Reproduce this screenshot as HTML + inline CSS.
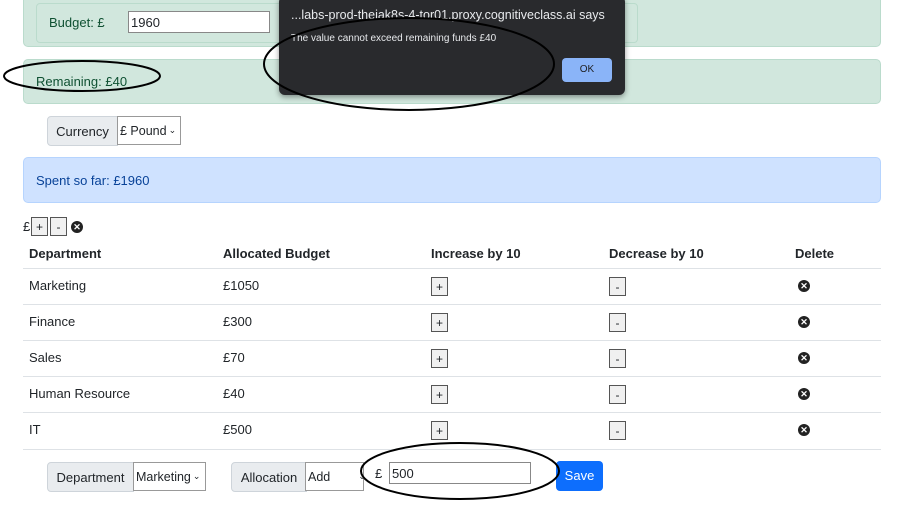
<!DOCTYPE html>
<html><head><style>
body{margin:0;width:902px;height:507px;position:relative;overflow:hidden;background:#fff;font-family:"Liberation Sans",sans-serif;font-size:13px;color:#212529}
.a{position:absolute;white-space:nowrap}
.green{background:#d1e7dd;border:1px solid #badbcc;border-radius:5px;color:#0f5132}
.grp{background:#e9ecef;border:1px solid #ced4da;border-radius:4px 0 0 4px;display:flex;align-items:center;justify-content:center;color:#212529}
.sel{background:#fff;border:1px solid #999;display:flex;align-items:center;padding-left:2px;box-sizing:border-box;font-size:12.5px;white-space:nowrap;overflow:hidden}
.sel i{font-style:normal;font-size:9px;margin-left:2px}
.th{font-weight:bold}
.line{position:absolute;left:23px;width:858px;height:1px;background:#dee2e6}
.btn{position:absolute;width:17px;height:19px;border:1px solid #555;background:#f0f0f0;font-size:12px;text-align:center;line-height:19px;box-sizing:border-box}
.x{position:absolute;width:12px;height:12px;border-radius:50%;background:#222;color:#fff;font-size:9px;line-height:12px;text-align:center;font-weight:bold}
</style></head><body>
<div class="a green" style="left:23px;top:-6px;width:856px;height:51px"></div>
<div class="a" style="left:36px;top:3px;width:600px;height:38px;border:1px solid #badbcc;border-radius:4px"></div>
<div class="a" style="left:49px;top:15px;color:#0f5132">Budget: £</div>
<div class="a" style="left:128px;top:11px;width:142px;height:22px;border:1px solid #888;background:#fff;box-sizing:border-box;padding:3px 2px">1960</div>
<div class="a green" style="left:23px;top:59px;width:856px;height:43px"></div>
<div class="a" style="left:36px;top:74px;color:#0f5132">Remaining: £40</div>
<div class="a grp" style="left:47px;top:116px;width:69px;height:28px">Currency</div>
<div class="a sel" style="left:117px;top:116px;width:64px;height:29px">£ Pound<i>⌄</i></div>
<div class="a" style="left:23px;top:157px;width:856px;height:44px;background:#cfe2ff;border:1px solid #b6d4fe;border-radius:5px"></div>
<div class="a" style="left:36px;top:173px;color:#084298">Spent so far: £1960</div>
<div class="a" style="left:23px;top:219px">£</div>
<div class="btn" style="left:31px;top:217px">+</div>
<div class="btn" style="left:50px;top:217px">-</div>
<div class="x" style="left:71px;top:221px">✕</div>
<div class="a th" style="left:29px;top:246px">Department</div>
<div class="a th" style="left:223px;top:246px">Allocated Budget</div>
<div class="a th" style="left:431px;top:246px">Increase by 10</div>
<div class="a th" style="left:609px;top:246px">Decrease by 10</div>
<div class="a th" style="left:795px;top:246px">Delete</div>
<div class="line" style="top:268px"></div>
<div class="a" style="left:29px;top:278px">Marketing</div><div class="a" style="left:223px;top:278px">£1050</div>
<div class="btn" style="left:431px;top:277px">+</div><div class="btn" style="left:609px;top:277px">-</div><div class="x" style="left:798px;top:280px">✕</div>
<div class="line" style="top:304px"></div>
<div class="a" style="left:29px;top:314px">Finance</div><div class="a" style="left:223px;top:314px">£300</div>
<div class="btn" style="left:431px;top:313px">+</div><div class="btn" style="left:609px;top:313px">-</div><div class="x" style="left:798px;top:316px">✕</div>
<div class="line" style="top:340px"></div>
<div class="a" style="left:29px;top:350px">Sales</div><div class="a" style="left:223px;top:350px">£70</div>
<div class="btn" style="left:431px;top:349px">+</div><div class="btn" style="left:609px;top:349px">-</div><div class="x" style="left:798px;top:352px">✕</div>
<div class="line" style="top:376px"></div>
<div class="a" style="left:29px;top:386px">Human Resource</div><div class="a" style="left:223px;top:386px">£40</div>
<div class="btn" style="left:431px;top:385px">+</div><div class="btn" style="left:609px;top:385px">-</div><div class="x" style="left:798px;top:388px">✕</div>
<div class="line" style="top:412px"></div>
<div class="a" style="left:29px;top:422px">IT</div><div class="a" style="left:223px;top:422px">£500</div>
<div class="btn" style="left:431px;top:421px">+</div><div class="btn" style="left:609px;top:421px">-</div><div class="x" style="left:798px;top:424px">✕</div>
<div class="line" style="top:449px"></div>
<div class="a grp" style="left:47px;top:462px;width:85px;height:28px">Department</div>
<div class="a sel" style="left:133px;top:462px;width:73px;height:29px">Marketing<i>⌄</i></div>
<div class="a grp" style="left:231px;top:462px;width:74px;height:28px">Allocation</div>
<div class="a sel" style="left:305px;top:462px;width:59px;height:29px">Add<i style="margin-left:28px">⌄</i></div>
<div class="a" style="left:375px;top:466px">£</div>
<div class="a" style="left:389px;top:462px;width:142px;height:22px;border:1px solid #888;background:#fff;box-sizing:border-box;padding:3px 2px">500</div>
<div class="a" style="left:556px;top:461px;width:47px;height:30px;background:#0d6efd;border-radius:4px;color:#fff;text-align:center;line-height:30px">Save</div>
<div class="a" style="left:279px;top:-4px;width:346px;height:99px;background:#292a2d;border-radius:6px;box-shadow:0 2px 6px rgba(0,0,0,.4)"></div>
<div class="a" style="left:291px;top:8px;color:#e8eaed;font-size:12.5px">...labs-prod-theiak8s-4-tor01.proxy.cognitiveclass.ai says</div>
<div class="a" style="left:291px;top:33px;color:#e8eaed;font-size:10px">The value cannot exceed remaining funds £40</div>
<div class="a" style="left:562px;top:58px;width:50px;height:24px;background:#8ab4f8;border-radius:4px;color:#202124;font-size:10px;text-align:center;line-height:24px">OK</div>
<svg class="a" style="left:0;top:0" width="902" height="507"><g fill="none" stroke="#000" stroke-width="2">
<ellipse cx="82" cy="76" rx="78" ry="15"/><ellipse cx="409" cy="64" rx="145" ry="46"/><ellipse cx="460" cy="471" rx="99" ry="28"/></g></svg>
</body></html>
